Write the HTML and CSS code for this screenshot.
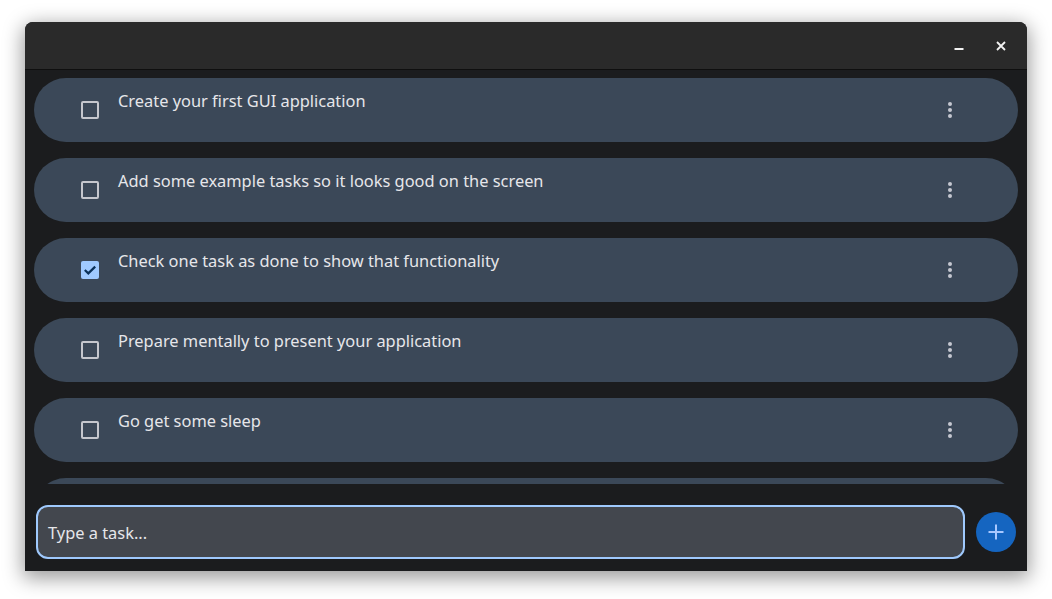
FILE: index.html
```html
<!DOCTYPE html>
<html>
<head>
<meta charset="utf-8">
<link rel="stylesheet" href="styles.css">
</head>
<body>
<div class="window">
  <div class="titlebar">
    <button class="tb-btn" aria-label="Minimize"><svg width="12" height="12" viewBox="0 0 12 12"><rect x="1.5" y="8" width="9" height="2" fill="#f2f2f2"/></svg></button>
    <button class="tb-btn" aria-label="Close"><svg width="12" height="12" viewBox="0 0 12 12"><path d="M2 2 L10 10 M10 2 L2 10" stroke="#f2f2f2" stroke-width="1.8" fill="none"/></svg></button>
  </div>
  <div class="list">
    <div class="task">
      <span class="check"></span>
      <span class="label">Create your first GUI application</span>
      <span class="kebab"><i></i><i></i><i></i></span>
    </div>
    <div class="task">
      <span class="check"></span>
      <span class="label">Add some example tasks so it looks good on the screen</span>
      <span class="kebab"><i></i><i></i><i></i></span>
    </div>
    <div class="task">
      <span class="check checked"><svg width="18" height="18" viewBox="0 0 18 18"><path d="M3.8 9 L7.3 12.4 L14.2 5.6" stroke="#0a3159" stroke-width="2.2" fill="none"/></svg></span>
      <span class="label">Check one task as done to show that functionality</span>
      <span class="kebab"><i></i><i></i><i></i></span>
    </div>
    <div class="task">
      <span class="check"></span>
      <span class="label">Prepare mentally to present your application</span>
      <span class="kebab"><i></i><i></i><i></i></span>
    </div>
    <div class="task">
      <span class="check"></span>
      <span class="label">Go get some sleep</span>
      <span class="kebab"><i></i><i></i><i></i></span>
    </div>
    <div class="task">
      <span class="check"></span>
      <span class="label"></span>
      <span class="kebab"><i></i><i></i><i></i></span>
    </div>
  </div>
  <div class="composer">
    <div class="input">Type a task...</div>
    <button class="add" aria-label="Add"><svg width="20" height="20" viewBox="0 0 20 20"><path d="M10 2.5 V17.5 M2.5 10 H17.5" stroke="#a8c8ff" stroke-width="2" fill="none"/></svg></button>
  </div>
</div>
</body>
</html>
```

FILE: styles.css
```css
html, body {
  margin: 0;
  padding: 0;
  background: #ffffff;
}
body {
  padding: 22px 25px 0 25px;
  min-height: 599px;
  box-sizing: border-box;
  font-family: "Noto Sans", "DejaVu Sans", sans-serif;
}
.window {
  width: 1002px;
  height: 549px;
  background: #1b1c1e;
  border-radius: 8px 8px 0 0;
  box-shadow: 0 5px 20px 2px rgba(0,0,0,0.4);
  display: flex;
  flex-direction: column;
  overflow: hidden;
}
.titlebar {
  height: 47px;
  flex: none;
  background: #2a2a2a;
  border-bottom: 1px solid #0f0f0f;
  display: flex;
  justify-content: flex-end;
  align-items: center;
  gap: 18px;
  padding: 0 14px 0 0;
}
.tb-btn {
  width: 24px;
  height: 24px;
  padding: 0;
  border: none;
  background: transparent;
  display: flex;
  align-items: center;
  justify-content: center;
}
.list {
  height: 414px;
  flex: none;
  overflow: hidden;
  padding: 8px 9px 0 9px;
  box-sizing: border-box;
  display: flex;
  flex-direction: column;
  gap: 16px;
}
.task {
  flex: none;
  height: 64px;
  border-radius: 32px;
  background: #3b4858;
  display: flex;
  align-items: center;
  position: relative;
}
.check {
  flex: none;
  width: 18px;
  height: 18px;
  box-sizing: border-box;
  border: 2px solid #c5c7ce;
  border-radius: 2px;
  margin-left: 47px;
  display: flex;
}
.check.checked {
  background: #a0caff;
  border: none;
}
.label {
  flex: 1;
  align-self: flex-start;
  margin-top: 11px;
  margin-left: 19px;
  color: #e6e6ea;
  font-size: 16.4px;
  line-height: 23px;
}
.kebab {
  flex: none;
  width: 4px;
  display: flex;
  flex-direction: column;
  gap: 2px;
  margin-right: 66px;
}
.kebab i {
  width: 4px;
  height: 4px;
  border-radius: 50%;
  background: #c4c7d0;
}
.composer {
  flex: 1;
  display: flex;
  align-items: center;
  gap: 11px;
  padding: 21px 11px 12px 11px;
}
.input {
  flex: 1;
  height: 54px;
  box-sizing: border-box;
  border: 2px solid #9fc9fd;
  border-radius: 12px;
  background: #43474e;
  color: #e6e6ea;
  font-size: 16.4px;
  display: flex;
  align-items: center;
  padding-left: 10px;
}
.add {
  flex: none;
  width: 40px;
  height: 40px;
  border-radius: 50%;
  border: none;
  padding: 0;
  background: #1565c0;
  display: flex;
  align-items: center;
  justify-content: center;
}
```
